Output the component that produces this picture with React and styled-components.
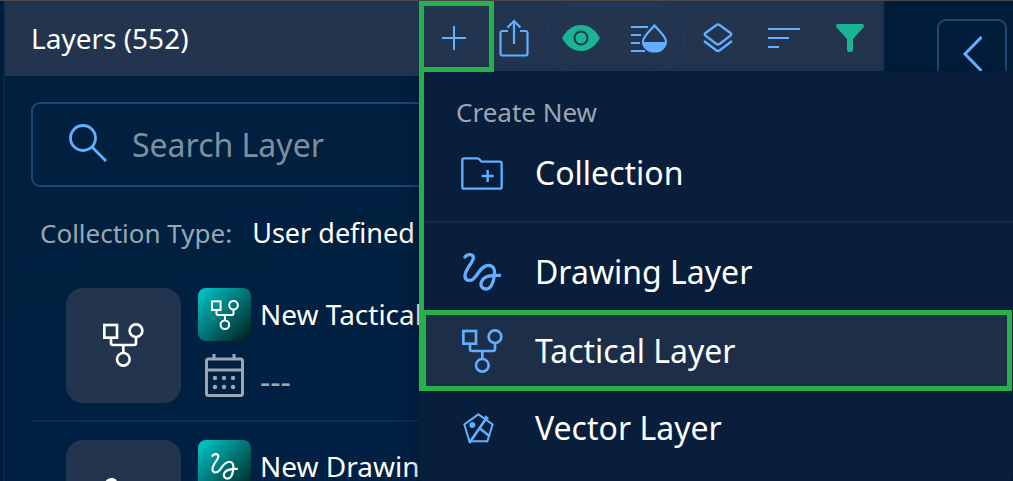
import { useState } from "react";
import styled, { createGlobalStyle, css } from "styled-components";

const GlobalStyle = createGlobalStyle`
	* {
		box-sizing: border-box;
	}

	body {
		margin: 0;
		background: #001c38;
		font-family: "Noto Sans", "Open Sans", sans-serif;
		color: #ffffff;
	}

	button,
	input {
		font: inherit;
		color: inherit;
		background: none;
		border: none;
		padding: 0;
		margin: 0;
	}

	button {
		cursor: pointer;
	}

	svg {
		display: block;
		flex: none;
	}
`;

const Page = styled.div`
	display: grid;
	grid-template-columns: minmax(0, 1fr) 128px;
	height: 100vh;
	overflow: hidden;
	border-top: 1px solid #494845;
`;

const Panel = styled.main`
	border-left: 2px solid #0b264b;
	border-right: 2px solid #0b294d;
	margin-left: 3px;
	background: linear-gradient(170deg, #001f3c 0%, #002145 75%);
`;

const Header = styled.header`
	display: flex;
	justify-content: space-between;
	align-items: flex-start;
	height: 75px;
	padding-left: 26px;
	background: #22344e;
`;

const Title = styled.h1`
	margin: 0;
	font-size: 28px;
	font-weight: 400;
	line-height: 75px;
	white-space: nowrap;
`;

const Toolbar = styled.div`
	display: flex;
	align-items: flex-start;
`;

const ToolButton = styled.button`
	display: flex;
	justify-content: center;
	align-items: center;
	width: ${(props) => props.$width || 66}px;
	height: 73px;
	color: ${(props) => (props.$on ? "#1ab394" : "#62aeff")};
`;

const Pill = styled.div`
	display: flex;
	align-items: center;
	height: 70px;
	margin: 2px 0 0 11px;
	border: 2px solid #1f3a5c;
	border-radius: 35px;

	${ToolButton} {
		height: 66px;
	}
`;

const AddWrapper = styled.div`
	position: relative;
	z-index: 1;
`;

const AddButton = styled.button`
	display: flex;
	justify-content: center;
	align-items: center;
	width: 75px;
	height: 71px;
	padding: 2px 5px 0 0;
	border: 5px solid #24b14c;
	color: #62aeff;
`;

const Menu = styled.div`
	position: absolute;
	top: 70px;
	left: 0;
	width: 594px;
	padding-bottom: 16px;
	background: #081e3a;
	border-radius: 0 0 5px 5px;
	box-shadow: 0 12px 20px rgb(0 10 25 / 0.4);
	/* keeps the menu under the outline of the button that opens it */
	z-index: -1;
`;

const MenuGroup = styled.div`
	border-left: 5px solid #24b14c;
	padding: ${(props) => (props.$first ? "25px 0 10px" : "11px 0 0")};
`;

const Divider = styled.div`
	height: 2px;
	border-left: 5px solid #24b14c;
	background: #122b4a;
`;

const MenuHeading = styled.div`
	padding: 0 32px 7px;
	font-size: 26px;
	line-height: 32px;
	color: #9ba6b3;
`;

const MenuItem = styled.button`
	display: grid;
	grid-template-columns: 44px 1fr;
	align-items: center;
	column-gap: 31px;
	width: 100%;
	height: ${(props) => (props.$outer ? 74 : 76)}px;
	padding-left: ${(props) => (props.$outer ? 41 : 36)}px;
	font-size: 32px;
	line-height: 40px;
	text-align: left;
	color: #ffffff;

	svg {
		color: #62aeff;
		justify-self: center;
	}

	${(props) =>
		props.$active &&
		css`
			width: calc(100% - 1px);
			height: 81px;
			padding-left: 34px;
			border: 5px solid #24b14c;
			border-left-width: 7px;
			background: #1d2f48;
		`}
`;

const Content = styled.div`
	padding: 26px;
`;

const SearchBox = styled.label`
	display: flex;
	align-items: center;
	gap: 25px;
	height: 85px;
	padding: 0 36px;
	border: 2px solid #1c4878;
	border-radius: 9px;
	color: #62aeff;

	svg {
		margin-bottom: 3px;
	}
`;

const SearchInput = styled.input`
	flex: 1;
	min-width: 0;
	font-size: 32px;
	line-height: 40px;
	color: #ffffff;
	outline: none;

	&::placeholder {
		color: #7f8fa0;
		opacity: 1;
	}
`;

const CollectionType = styled.div`
	display: flex;
	align-items: baseline;
	gap: 20px;
	padding: 26px 9px 35px;
	font-size: 27px;
	line-height: 40px;
	white-space: nowrap;
`;

const Caption = styled.span`
	font-size: 26px;
	color: #9ba6b3;
`;

const LayerList = styled.ul`
	list-style: none;
	margin: 0;
	padding: 0;
`;

const LayerRow = styled.li`
	display: flex;
	gap: 17px;
	padding: 0 0 17px 35px;
	margin-bottom: 18px;
	border-bottom: 2px solid #0a2d54;
`;

const Thumbnail = styled.div`
	display: flex;
	justify-content: center;
	align-items: center;
	width: 115px;
	height: 115px;
	padding-bottom: 2px;
	border-radius: 17px;
	background: #22344e;
`;

const LayerInfo = styled.div`
	display: grid;
	grid-template-columns: 53px 1fr;
	grid-template-rows: 53px 1fr;
	column-gap: 9px;
	row-gap: 13px;
	align-items: center;
	font-size: 28px;
	line-height: 36px;
	white-space: nowrap;
`;

const Badge = styled.div`
	display: flex;
	justify-content: center;
	align-items: center;
	width: 53px;
	height: 53px;
	border-radius: 8px;
	background: linear-gradient(135deg, #00cccb 0%, #001a1c 100%);
`;

const Name = styled.span`
	padding-bottom: 2px;
`;

const DateIcon = styled.span`
	justify-self: center;
	align-self: start;
	color: #9ba6b3;
`;

const DateText = styled.span`
	align-self: end;
	padding-bottom: 3px;
	font-size: 32px;
	color: #9ba6b3;
`;

const Side = styled.aside`
	display: flex;
	justify-content: flex-end;
	align-items: flex-start;
	padding: 18px 6px 0 0;
`;

const CollapseButton = styled.button`
	display: flex;
	justify-content: center;
	align-items: center;
	width: 70px;
	height: 70px;
	border: 2px solid #1c4878;
	border-radius: 9px;
	color: #62aeff;
`;

const Svg = ({ width, height, box, stroke = 2, children }) => (
	<svg
		width={width}
		height={height}
		viewBox={box || `0 0 ${width} ${height}`}
		fill="none"
		stroke="currentColor"
		strokeWidth={stroke}
		aria-hidden="true"
	>
		{children}
	</svg>
);

const PlusIcon = () => (
	<Svg width={24} height={24}>
		<path d="M12 0v24M0 12h24" />
	</Svg>
);

const ShareIcon = () => (
	<Svg width={30} height={38} stroke={2.2}>
		<path d="M9 12H3.500q-2 0-2 2v20.500q0 2 2 2h23q2 0 2-2V14q0-2-2-2H21" />
		<path d="M15 25V2M8.500 8.500 15 2l6.500 6.500" />
	</Svg>
);

const EyeIcon = () => (
	<Svg width={38} height={26}>
		<path
			d="M19 0C28 0 34 6 38 13 34 20 28 26 19 26 10 26 4 20 0 13 4 6 10 0 19 0Z"
			fill="currentColor"
			stroke="none"
		/>
		<circle cx="19" cy="13" r="6.500" stroke="#22344e" />
	</Svg>
);

const OpacityIcon = () => (
	<Svg width={36} height={29} stroke={2.2}>
		<path d="M0 3h17M0 11h10M0 19h9M0 27h14" />
		<path d="M23.500 1.500C19 7 12 12.500 12 17.500a11.500 10 0 0 0 23 0C35 12.500 28 7 23.500 1.500Z" />
		<path
			d="M12 18h23a11.500 9.500 0 0 1-23 0Z"
			fill="currentColor"
			stroke="none"
		/>
	</Svg>
);

const LayersIcon = () => (
	<Svg width={30} height={30} stroke={2.4}>
		<path
			d="M13.500 2q1.500-1.200 3 0l11 8q1.500 1.200 0 2.600l-11 8.400q-1.500 1.100-3 0l-11-8.400q-1.500-1.400 0-2.600Z"
			strokeLinejoin="round"
		/>
		<path d="M1 18l12.500 9.500q1.500 1.100 3 0L29 18" />
	</Svg>
);

const SortIcon = () => (
	<Svg width={32} height={22}>
		<path d="M0 2h32M0 11h21M0 20h11" />
	</Svg>
);

const FilterIcon = () => (
	<Svg width={28} height={28}>
		<path
			d="M1.500 0h25q1.500 0 1.500 2 0 1-1 2L17 15v11q0 2-2 2h-2q-2 0-2-2V15L1 4Q0 3 0 2 0 0 1.500 0Z"
			fill="currentColor"
			stroke="none"
		/>
	</Svg>
);

const SearchIcon = () => (
	<Svg width={38} height={38} stroke={2.8}>
		<circle cx="14" cy="14" r="12.500" />
		<path d="M23 23l14 14" />
	</Svg>
);

const ChevronIcon = () => (
	<Svg width={20} height={36} stroke={3}>
		<path d="M19.500 1 3 18l16.500 17" />
	</Svg>
);

const FolderIcon = () => (
	<Svg width={42} height={33} box="0 0 126 99" stroke={7}>
		<path d="M4 9q0-5 5-5h40q3 0 5 2l7 7q2 1 4 1h52q5 0 5 5v71q0 5-5 5H9q-5 0-5-5Z" />
		<path d="M80 39v36M62 57h36" />
	</Svg>
);

const DrawingIcon = ({ width = 38, height = 38, stroke = 10 }) => (
	<Svg width={width} height={height} box="0 0 114 114" stroke={stroke}>
		<path
			d="M6 12C11 3 33 1 31 15 29 31 6 48 6 69c0 15 17 17 27 7C47 62 54 38 77 37c15 0 19 13 17 29-2 24-11 42-25 42-13 0-18-12-13-23 8-17 28-18 54-18"
			strokeLinecap="round"
		/>
	</Svg>
);

const TacticalIcon = ({ width = 41, height = 44, stroke = 8 }) => (
	<Svg width={width} height={height} box="0 0 123 132" stroke={stroke}>
		<rect x="4" y="6" width="38" height="38" />
		<circle cx="99" cy="23" r="19" />
		<circle cx="61" cy="109" r="19" />
		<path d="M24 44v16q0 6 6 6h63q6 0 6-6V42M61 66v24" />
	</Svg>
);

const VectorIcon = () => (
	<Svg width={38} height={31} box="0 0 114 93" stroke={6}>
		<path d="M46 4 89 34 73 85H19L4 34Z" />
		<circle cx="28" cy="36" r="9" fill="currentColor" stroke="none" />
		<path d="M19 90 72 13M50 46l30 24" strokeWidth="8" />
		<path d="M66 9l10 9" />
	</Svg>
);

const CalendarIcon = () => (
	<Svg width={39} height={43} stroke={3}>
		<rect x="1.500" y="5" width="36" height="36.500" rx="2" />
		<path d="M1.500 16h36M9 0v5M29 0v5" />
		<g fill="currentColor" stroke="none">
			{[10, 19, 28].map((x) => (
				<g key={x}>
					<circle cx={x} cy="24" r="2.200" />
					<circle cx={x} cy="33" r="2.200" />
				</g>
			))}
		</g>
	</Svg>
);

const layers = [
	{ name: "New Tactical", date: "---", Icon: TacticalIcon, small: [28, 30] },
	{ name: "New Drawing", date: "---", Icon: DrawingIcon, small: [27, 27] },
];

export default function App() {
	const [menuOpen, setMenuOpen] = useState(true);
	const [keyword, setKeyword] = useState("");

	return (
		<>
			<GlobalStyle />
			<Page>
				<Panel>
					<Header>
						<Title>Layers (552)</Title>
						<Toolbar>
							<AddWrapper>
								<AddButton
									aria-label="Create new"
									aria-expanded={menuOpen}
									onClick={() => setMenuOpen(!menuOpen)}
								>
									<PlusIcon />
								</AddButton>
								{menuOpen && (
									<Menu>
										<MenuGroup $first>
											<MenuHeading>Create New</MenuHeading>
											<MenuItem>
												<FolderIcon />
												Collection
											</MenuItem>
										</MenuGroup>
										<Divider />
										<MenuGroup>
											<MenuItem>
												<DrawingIcon />
												Drawing Layer
											</MenuItem>
										</MenuGroup>
										<MenuItem $active>
											<TacticalIcon />
											Tactical Layer
										</MenuItem>
										<MenuItem $outer>
											<VectorIcon />
											Vector Layer
										</MenuItem>
									</Menu>
								)}
							</AddWrapper>
							<ToolButton $width={40} aria-label="Export">
								<ShareIcon />
							</ToolButton>
							<Pill>
								<ToolButton $width={68} $on aria-label="Visibility">
									<EyeIcon />
								</ToolButton>
								<ToolButton $width={68} aria-label="Opacity">
									<OpacityIcon />
								</ToolButton>
							</Pill>
							<ToolButton aria-label="Layers">
								<LayersIcon />
							</ToolButton>
							<ToolButton aria-label="Sort">
								<SortIcon />
							</ToolButton>
							<ToolButton $on aria-label="Filter">
								<FilterIcon />
							</ToolButton>
						</Toolbar>
					</Header>

					<Content>
						<SearchBox>
							<SearchIcon />
							<SearchInput
								type="text"
								aria-label="Search Layer"
								placeholder="Search Layer"
								value={keyword}
								onChange={(e) => setKeyword(e.target.value)}
							/>
						</SearchBox>

						<CollectionType>
							<Caption>Collection Type:</Caption>
							<span>User defined</span>
						</CollectionType>

						<LayerList>
							{layers.map(({ name, date, Icon, small }) => (
								<LayerRow key={name}>
									<Thumbnail>
										<Icon />
									</Thumbnail>
									<LayerInfo>
										<Badge>
											<Icon width={small[0]} height={small[1]} stroke={9} />
										</Badge>
										<Name>{name}</Name>
										<DateIcon>
											<CalendarIcon />
										</DateIcon>
										<DateText>{date}</DateText>
									</LayerInfo>
								</LayerRow>
							))}
						</LayerList>
					</Content>
				</Panel>

				<Side>
					<CollapseButton aria-label="Collapse panel">
						<ChevronIcon />
					</CollapseButton>
				</Side>
			</Page>
		</>
	);
}
